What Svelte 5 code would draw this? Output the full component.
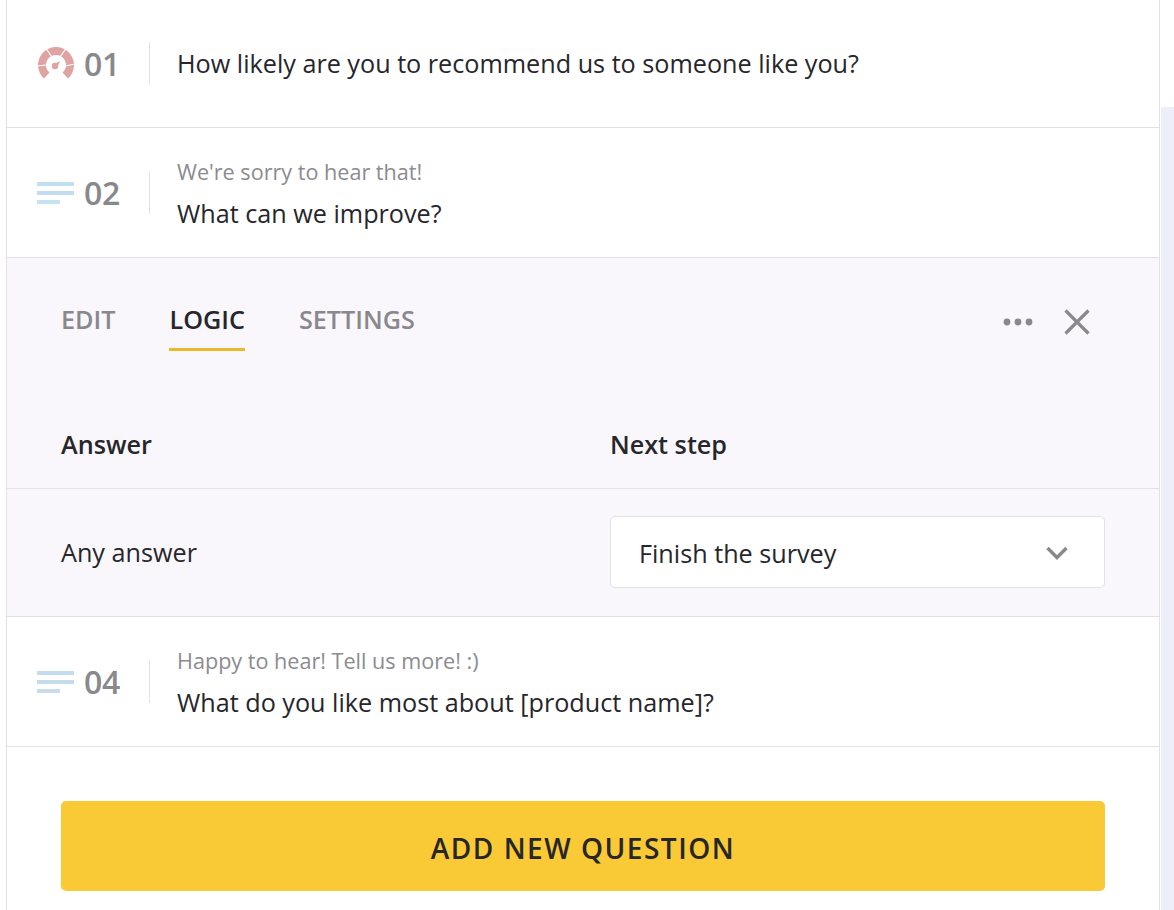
<script>
  const tabs = [
    { label: 'EDIT', active: false },
    { label: 'LOGIC', active: true },
    { label: 'SETTINGS', active: false }
  ];
</script>

<div class="page">
  <main class="card">
    <section class="row first">
      <div class="lead">
        <svg class="icon gauge" width="38" height="33" viewBox="0 0 38 33" aria-hidden="true">
          <path d="M7 31.5 A18 18 0 1 1 31 31.5 L25.5 25.5 A10 10 0 1 0 12.5 25.5 Z" fill="#dfa3a1" />
          <path d="M9 1.5 L15 10 M29 1.5 L23 10 M0 19 L9 18 M38 17 L28 19" stroke="#fff" stroke-width="1.2" fill="none" />
          <circle cx="18" cy="19" r="3.2" fill="#dfa3a1" />
          <path d="M18.6 16.4 L23 14 L21 19 Z" fill="#dfa3a1" />
        </svg>
        <span class="num">01</span>
      </div>
      <div class="text"><p class="question">How likely are you to recommend us to someone like you?</p></div>
    </section>

    <section class="row">
      <div class="lead">
        <svg class="icon" width="38" height="24" viewBox="0 0 38 24" aria-hidden="true">
          <rect x="0" y="1" width="37" height="4" fill="#c1e0ef" />
          <rect x="0" y="10" width="37" height="4" fill="#c1dcec" />
          <rect x="0" y="19" width="23" height="4" fill="#c6e3f0" />
        </svg>
        <span class="num">02</span>
      </div>
      <div class="text">
        <p class="hint">We're sorry to hear that!</p>
        <p class="question">What can we improve?</p>
      </div>
    </section>

    <section class="panel">
      <div class="tabbar">
        <nav class="tabs">
          {#each tabs as tab}
            <span class="tab" class:active={tab.active}>{tab.label}</span>
          {/each}
        </nav>
        <div class="actions">
          <svg width="30" height="8" viewBox="0 0 30 8" aria-hidden="true">
            <circle cx="4" cy="4" r="3.4" fill="#88888d" />
            <circle cx="15" cy="4" r="3.4" fill="#88888d" />
            <circle cx="26" cy="4" r="3.4" fill="#88888d" />
          </svg>
          <svg width="26" height="26" viewBox="0 0 26 26" aria-hidden="true">
            <path d="M1.5 1.5 L24.5 24.5 M24.5 1.5 L1.5 24.5" stroke="#88888d" stroke-width="3.2" fill="none" />
          </svg>
        </div>
      </div>

      <div class="logic-head">
        <span>Answer</span>
        <span>Next step</span>
      </div>

      <div class="logic-row">
        <span class="answer">Any answer</span>
        <div class="select">
          <span class="select-value">Finish the survey</span>
          <svg width="22" height="14" viewBox="0 0 22 14" aria-hidden="true">
            <path d="M1.5 2 L11 11.5 L20.5 2" stroke="#88888d" stroke-width="3.4" fill="none" />
          </svg>
        </div>
      </div>
    </section>

    <section class="row">
      <div class="lead">
        <svg class="icon" width="38" height="24" viewBox="0 0 38 24" aria-hidden="true">
          <rect x="0" y="1" width="37" height="4" fill="#c4dcec" />
          <rect x="0" y="10" width="37" height="4" fill="#c4dcec" />
          <rect x="0" y="19" width="23" height="4" fill="#c8dcea" />
        </svg>
        <span class="num">04</span>
      </div>
      <div class="text">
        <p class="hint">Happy to hear! Tell us more! :)</p>
        <p class="question">What do you like most about [product name]?</p>
      </div>
    </section>

    <div class="footer">
      <button class="add" type="button">ADD NEW QUESTION</button>
    </div>
  </main>
  <aside class="strip"></aside>
</div>

<style>
  :global(body) {
    margin: 0;
    background: #fff;
  }
  .page {
    display: grid;
    grid-template-columns: 1fr 13px;
    height: 910px;
    overflow: hidden;
    padding-left: 6px;
    font-family: "Open Sans", sans-serif;
    color: #26262b;
  }
  .card {
    width: 1154px;
    box-sizing: border-box;
    border-left: 1px solid #e2e1e6;
    border-right: 1px solid #e2e1e6;
    background: #fff;
  }
  .strip {
    margin-top: 107px;
    background: #eeeefb;
  }
  .row {
    display: flex;
    align-items: center;
    height: 129px;
    border-bottom: 1px solid #e2e1e6;
    padding-left: 30px;
  }
  .row.first {
    height: 127px;
  }
  .lead {
    display: flex;
    align-items: center;
    width: 112px;
    height: 43px;
    border-right: 1px solid #e2e1e6;
    flex: none;
  }
  .icon {
    flex: none;
    margin-right: 9px;
    margin-top: 1px;
  }
  .gauge {
    margin-top: 0;
  }
  .num {
    font-size: 32px;
    font-weight: 600;
    line-height: 43px;
    color: #88888d;
    letter-spacing: -0.2px;
  }
  .text {
    padding-left: 27px;
    margin-top: -2px;
  }
  p {
    margin: 0;
  }
  .hint {
    font-size: 21.6px;
    line-height: 27px;
    color: #8b8b90;
    margin-top: 4px;
    margin-bottom: 12px;
  }
  .question {
    font-size: 25.2px;
    line-height: 32px;
    color: #26262b;
  }
  .panel {
    background: #f9f7fb;
    border-bottom: 1px solid #e2e1e6;
  }
  .tabbar {
    display: flex;
    justify-content: space-between;
    align-items: flex-start;
    height: 93px;
    padding: 0 69px 0 54px;
  }
  .tabs {
    display: flex;
    gap: 54px;
    padding-top: 43px;
  }
  .tab {
    font-size: 25.2px;
    font-weight: 600;
    line-height: 36px;
    color: #88888d;
    padding-bottom: 12px;
  }
  .tab.active {
    color: #26262b;
    border-bottom: 3px solid #ecba26;
    padding-bottom: 11px;
  }
  .actions {
    display: flex;
    align-items: center;
    gap: 31px;
    padding-top: 51px;
  }
  .logic-head {
    display: grid;
    grid-template-columns: 549px 1fr;
    padding-left: 54px;
    height: 138px;
    box-sizing: border-box;
    padding-top: 77px;
    border-bottom: 1px solid #e2e1e6;
    font-size: 25.2px;
    line-height: 32px;
    font-weight: 600;
    color: #26262b;
  }
  .logic-row {
    display: grid;
    grid-template-columns: 549px 495px;
    align-items: center;
    padding-left: 54px;
    height: 127px;
    font-size: 25.2px;
    color: #26262b;
  }
  .answer {
    margin-top: -2px;
  }
  .select {
    display: flex;
    justify-content: space-between;
    align-items: center;
    box-sizing: border-box;
    height: 72px;
    padding: 0 36px 0 28px;
    background: #fff;
    border: 1px solid #e2e1e6;
    border-radius: 5px;
    margin-top: -2px;
  }
  .select-value {
    margin-top: 2px;
  }
  .select svg {
    margin-top: 2px;
  }
  .footer {
    padding: 54px 54px 0;
  }
  .add {
    display: block;
    width: 100%;
    height: 90px;
    border: 0;
    padding: 4px 0 0;
    border-radius: 5px;
    background: #fac936;
    font-family: "Open Sans", sans-serif;
    font-size: 28px;
    font-weight: 600;
    letter-spacing: 1.5px;
    color: #26262b;
  }
</style>
